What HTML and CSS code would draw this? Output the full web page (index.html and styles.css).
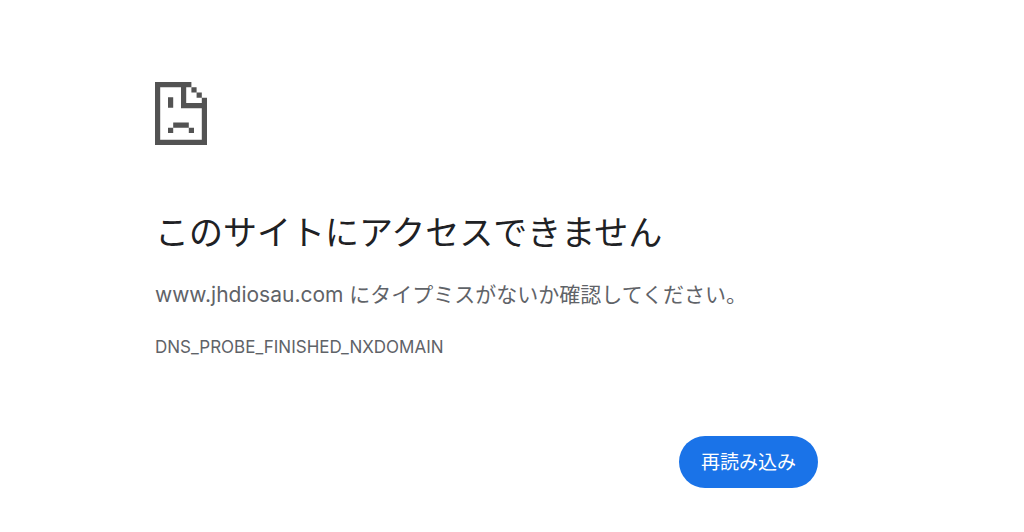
FILE: index.html
```
<!DOCTYPE html>
<html lang="ja">
<head>
    <meta charset="UTF-8">
    <meta name="viewport" content="width=device-width, initial-scale=1">
    <title>www.jhdiosau.com</title>
    <link rel="stylesheet" href="styles.css">
</head>
<body>
    <main class="error-page">
        <svg class="icon" viewBox="0 0 100 120" preserveAspectRatio="none" aria-hidden="true">
            <path d="M0 0H70V10H60V40H100V120H0ZM10 10V110H90V50H50V10Z" fill-rule="evenodd"/>
            <path d="M70 10H80V20H90V30H100V40H90V30H80V20H70Z"/>
            <path d="M25 29H35V49H25ZM35 77H65V87H35ZM25 87H35V97H25ZM65 87H75V97H65Z"/>
        </svg>
        <h1>このサイトにアクセスできません</h1>
        <p class="summary">www.jhdiosau.com にタイプミスがないか確認してください。</p>
        <p class="error-code">DNS_PROBE_FINISHED_NXDOMAIN</p>
        <div class="buttons">
            <button type="button" class="reload" onclick="location.reload()">再読み込み</button>
        </div>
    </main>
</body>
</html>
```
FILE: styles.css
```
body { margin: 0; background: #fff; color: #5f6368; font-family: Inter, "Noto Sans CJK JP", sans-serif; }
.error-page { max-width: 663px; margin: 0 auto 0 155px; padding-top: 82px; }
.icon { display: block; width: 52px; height: 63px; fill: #535353; }
h1 { margin: 63px 0 0; color: #202124; font-size: 34px; font-weight: 400; line-height: 50px; }
p { margin: 0; }
.summary { margin-top: 21px; font-size: 21px; line-height: 32px; }
.error-code { margin-top: 24px; font-size: 17px; line-height: 24px; }
.buttons { display: flex; justify-content: flex-end; margin-top: 77px; }
.reload { padding: 13px 22px 11px; border: none; border-radius: 26px; background: #1a73e8; color: #fff; font-family: inherit; font-size: 19px; line-height: 28px; cursor: pointer; }
```
